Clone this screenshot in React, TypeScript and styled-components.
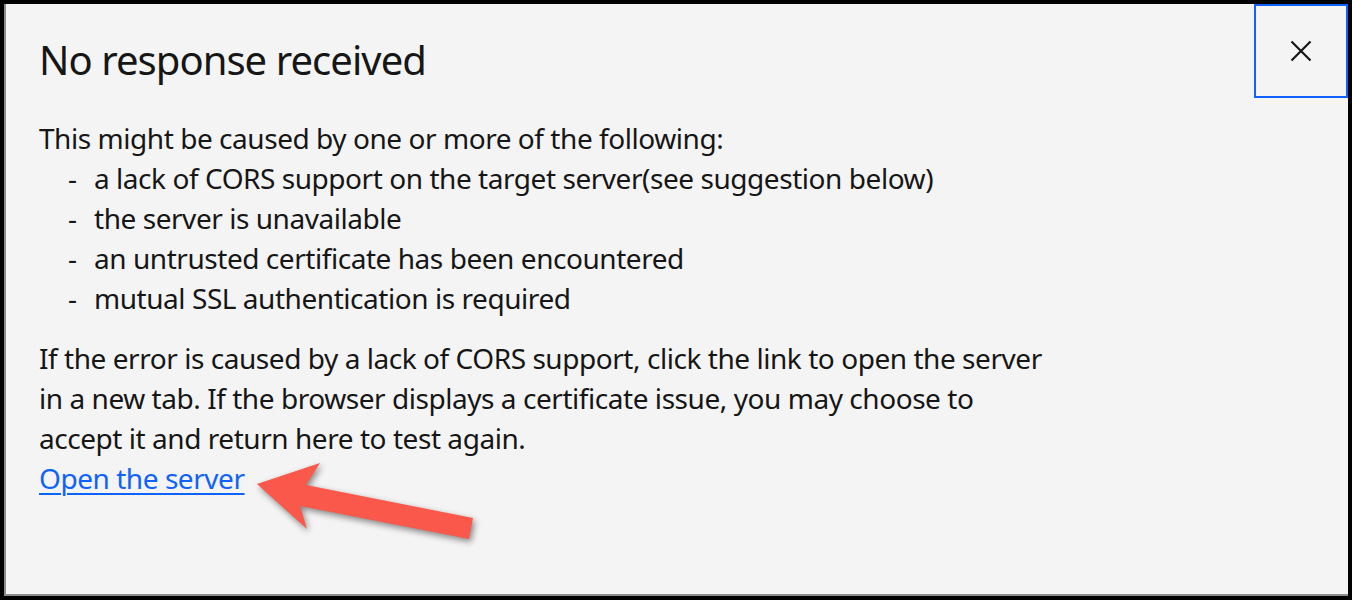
import React from "react";
import styled, { createGlobalStyle } from "styled-components";

const Global = createGlobalStyle`
  html, body {
    margin: 0;
    padding: 0;
    background: #000;
  }
  body {
    width: 1352px;
    height: 600px;
    overflow: hidden;
    font-family: "Noto Sans", "Open Sans", sans-serif;
  }
  #root {
    height: 600px;
  }
`;

const Frame = styled.div`
  box-sizing: border-box;
  width: 1352px;
  height: 600px;
  padding: 4px;
  background: #000;
`;

const Panel = styled.div`
  position: relative;
  box-sizing: border-box;
  height: 100%;
  background: #f4f4f4;
  border-left: 2px solid #8d8d8d;
  border-bottom: 2px solid #8d8d8d;
  display: flex;
  flex-direction: column;
  padding: 0 0 0 33px;
  color: #161616;
`;

const Header = styled.div`
  display: flex;
  justify-content: space-between;
  align-items: flex-start;
`;

const Title = styled.h2`
  margin: 28px 0 0 0;
  font-size: 40px;
  line-height: 56px;
  font-weight: 400;
  letter-spacing: -0.95px;
  color: #161616;
`;

const CloseButton = styled.button`
  box-sizing: border-box;
  width: 94px;
  height: 94px;
  border: 2px solid #0f62fe;
  background: transparent;
  padding: 0;
  display: flex;
  align-items: center;
  justify-content: center;
  cursor: pointer;
`;

const Body = styled.div`
  margin-top: 20px;
  font-size: 28px;
  line-height: 40px;
  letter-spacing: -0.45px;
`;

const Para = styled.p`
  margin: 0;
`;

const List = styled.ul`
  list-style: none;
  margin: 0 0 20px 0;
  padding: 0;
`;

const Item = styled.li`
  display: flex;
`;

const Dash = styled.span`
  width: 55px;
  padding-left: 29px;
  box-sizing: border-box;
`;

const Link = styled.a`
  color: #0f62fe;
  text-decoration: underline;
  text-underline-offset: 4px;
  text-decoration-thickness: 2px;
`;

const Arrow = styled.svg`
  position: absolute;
  left: 0;
  top: 0;
  pointer-events: none;
  filter: drop-shadow(2px 3px 3px rgba(0, 0, 0, 0.45));
`;

const items = [
  "a lack of CORS support on the target server(see suggestion below)",
  "the server is unavailable",
  "an untrusted certificate has been encountered",
  "mutual SSL authentication is required",
];

export default function App() {
  return (
    <>
      <Global />
      <Frame>
        <Panel>
          <Header>
            <Title>No response received</Title>
            <CloseButton aria-label="close">
              <svg width="22" height="22" viewBox="0 0 22 22">
                <path d="M1.5 1.5 L20.5 20.5 M20.5 1.5 L1.5 20.5" stroke="#161616" strokeWidth="2.2" fill="none" />
              </svg>
            </CloseButton>
          </Header>
          <Body>
            <Para>This might be caused by one or more of the following:</Para>
            <List>
              {items.map((t) => (
                <Item key={t}>
                  <Dash>-</Dash>
                  <span>{t}</span>
                </Item>
              ))}
            </List>
            <Para>
              If the error is caused by a lack of CORS support, click the link to open the server
              <br />
              in a new tab. If the browser displays a certificate issue, you may choose to
              <br />
              accept it and return here to test again.
            </Para>
            <Link href="#">Open the server</Link>
          </Body>
          <Arrow width="1346" height="596" viewBox="0 0 1346 596">
            <polygon
              points="251,480 314,459 300,481 467,514 463,535 294,502 301,525"
              fill="#fa584a"
            />
          </Arrow>
        </Panel>
      </Frame>
    </>
  );
}
